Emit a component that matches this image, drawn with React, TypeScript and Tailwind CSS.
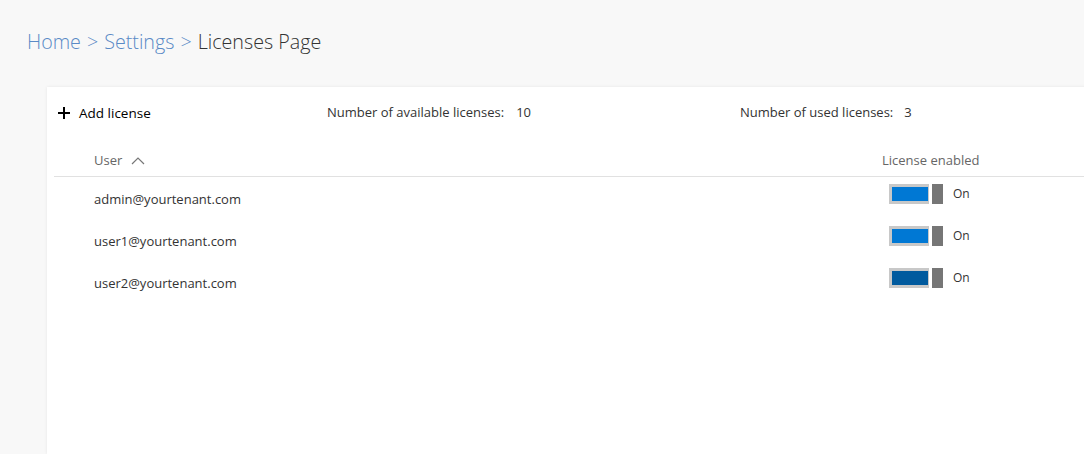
import React from "react";

const font = { fontFamily: '"Open Sans", "Noto Sans", sans-serif' };

function Toggle({ dark }: { dark?: boolean }) {
  return (
    <div className="flex items-center">
      <div className="w-[40px] h-[20px] bg-[#c8c8c8] pl-[3px] pr-[1px] py-[3px]">
        <div className={dark ? "w-full h-full bg-[#005a9e]" : "w-full h-full bg-[#0078d4]"} />
      </div>
      <div className="ml-[3px] w-[11px] h-[20px] bg-[#767676]" />
      <span className="ml-[10px] text-[12px] text-[#333333]">On</span>
    </div>
  );
}

const users = ["admin@yourtenant.com", "user1@yourtenant.com", "user2@yourtenant.com"];

export default function App() {
  return (
    <div className="w-[1084px] h-[454px] overflow-hidden bg-[#f8f8f8] flex flex-col" style={font}>
      <div className="h-[87px] pl-[27px] pt-[26px]">
        <div className="text-[19.7px] font-light leading-[32px] flex items-center">
          <span className="text-[#5a8ac6]">Home</span>
          <span className="text-[#5a8ac6] mx-[6px]">&gt;</span>
          <span className="text-[#5a8ac6]">Settings</span>
          <span className="text-[#5a8ac6] mx-[6px]">&gt;</span>
          <span className="text-[#333333]">Licenses Page</span>
        </div>
      </div>
      <div className="flex-1 ml-[47px] -mr-[20px] bg-white shadow-[0_0_3px_rgba(0,0,0,0.08)] pt-[6px]">
        <div className="h-[40px] flex items-center text-[13px] text-[#333333]">
          <div className="w-[280px] pl-[11px] flex items-center">
            <svg width="12" height="12" viewBox="0 0 12 12" className="mr-[9px]">
              <path d="M6 0V12M0 6H12" stroke="#000" strokeWidth="2" />
            </svg>
            <span className="text-[13.5px] text-[#000]">Add license</span>
          </div>
          <div className="w-[413px]">
            Number of available licenses:<span className="ml-[12px]">10</span>
          </div>
          <div>
            Number of used licenses:<span className="ml-[11px]">3</span>
          </div>
        </div>
        <div className="ml-[7px] h-[44px] pt-[12px] border-b border-[#e1e1e1] flex items-center text-[13px] text-[#666666]">
          <div className="w-[828px] pl-[40px] flex items-center">
            <span>User</span>
            <svg width="14" height="9" viewBox="0 0 14 9" className="ml-[9px]">
              <path d="M1 8L7 2L13 8" stroke="#777" strokeWidth="1.2" fill="none" />
            </svg>
          </div>
          <div>License enabled</div>
        </div>
        {users.map((u, i) => (
          <div key={u} className="ml-[7px] h-[42px] flex items-start pt-[7px] text-[13px] text-[#333333]">
            <div className="w-[835px] pl-[40px] h-[20px] mt-[6px] flex items-center">{u}</div>
            <Toggle dark={i === 2} />
          </div>
        ))}
      </div>
    </div>
  );
}
